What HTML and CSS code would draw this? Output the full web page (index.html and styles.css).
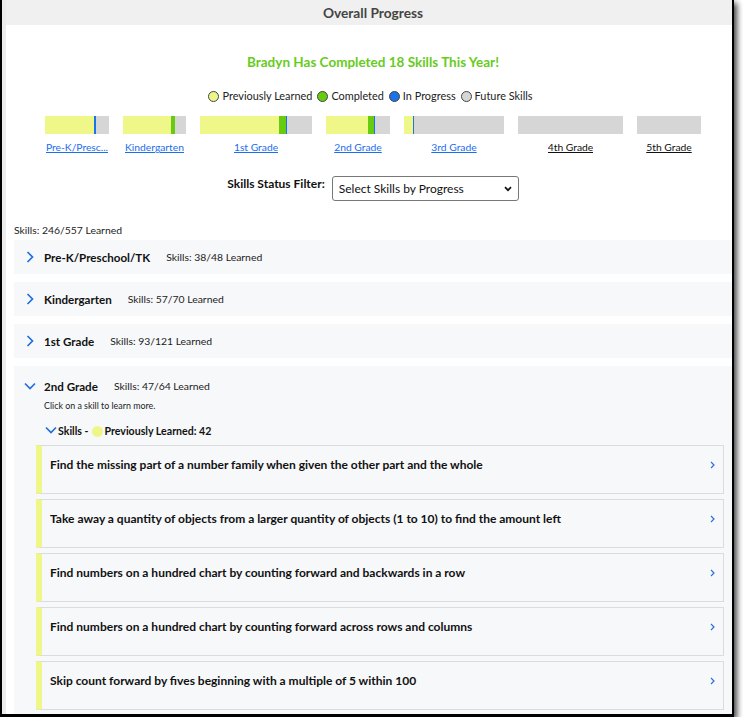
FILE: index.html
```html
<!DOCTYPE html>
<html>
<head>
<meta charset="utf-8">
<link rel="stylesheet" href="styles.css">
</head>
<body>
<div class="window">
  <div class="page">
    <div class="header">Overall Progress</div>
    <div class="title">Bradyn Has Completed 18 Skills This Year!</div>
    <div class="legend">
      <span class="dot dot-prev"></span><span class="leg-text">Previously Learned</span>
      <span class="dot dot-comp"></span><span class="leg-text">Completed</span>
      <span class="dot dot-prog"></span><span class="leg-text">In Progress</span>
      <span class="dot dot-future"></span><span class="leg-text">Future Skills</span>
    </div>
    <div class="bars">
      <div class="bar-col" style="width:64px">
        <div class="bar"><span class="seg prev" style="width:49px"></span><span class="seg prog" style="width:2px"></span></div>
        <a class="bar-label link">Pre-K/Presc...</a>
      </div>
      <div class="bar-col" style="width:63px">
        <div class="bar"><span class="seg prev" style="width:48px"></span><span class="seg comp" style="width:4px"></span></div>
        <a class="bar-label link">Kindergarten</a>
      </div>
      <div class="bar-col" style="width:112px">
        <div class="bar"><span class="seg prev" style="width:79px"></span><span class="seg comp" style="width:7px"></span><span class="seg prog" style="width:1px"></span></div>
        <a class="bar-label link">1st Grade</a>
      </div>
      <div class="bar-col" style="width:64px">
        <div class="bar"><span class="seg prev" style="width:42px"></span><span class="seg comp" style="width:6px"></span><span class="seg prog" style="width:1px"></span></div>
        <a class="bar-label link">2nd Grade</a>
      </div>
      <div class="bar-col" style="width:100px">
        <div class="bar"><span class="seg prev" style="width:9px"></span><span class="seg prog" style="width:1px"></span></div>
        <a class="bar-label link">3rd Grade</a>
      </div>
      <div class="bar-col" style="width:105px">
        <div class="bar"></div>
        <a class="bar-label plain">4th Grade</a>
      </div>
      <div class="bar-col" style="width:64px">
        <div class="bar"></div>
        <a class="bar-label plain">5th Grade</a>
      </div>
    </div>
    <div class="filter">
      <span class="filter-label">Skills Status Filter:</span>
      <div class="select">
        <span>Select Skills by Progress</span>
        <svg class="sel-chev" width="8" height="6" viewBox="0 0 8 6"><path d="M1 1.2 L4 4.2 L7 1.2" fill="none" stroke="#111" stroke-width="1.7"/></svg>
      </div>
    </div>
    <div class="total">Skills: 246/557 Learned</div>

    <div class="acc">
      <div class="acc-head">
        <svg class="chev-r" width="8" height="12" viewBox="0 0 8 12"><path d="M1.5 1 L6.5 6 L1.5 11" fill="none" stroke="#1f6fe0" stroke-width="1.7"/></svg>
        <span class="acc-title">Pre-K/Preschool/TK</span>
        <span class="acc-count">Skills: 38/48 Learned</span>
      </div>
    </div>
    <div class="acc">
      <div class="acc-head">
        <svg class="chev-r" width="8" height="12" viewBox="0 0 8 12"><path d="M1.5 1 L6.5 6 L1.5 11" fill="none" stroke="#1f6fe0" stroke-width="1.7"/></svg>
        <span class="acc-title">Kindergarten</span>
        <span class="acc-count">Skills: 57/70 Learned</span>
      </div>
    </div>
    <div class="acc">
      <div class="acc-head">
        <svg class="chev-r" width="8" height="12" viewBox="0 0 8 12"><path d="M1.5 1 L6.5 6 L1.5 11" fill="none" stroke="#1f6fe0" stroke-width="1.7"/></svg>
        <span class="acc-title">1st Grade</span>
        <span class="acc-count">Skills: 93/121 Learned</span>
      </div>
    </div>
    <div class="acc open">
      <div class="acc-head">
        <svg class="chev-d" width="12" height="8" viewBox="0 0 12 8"><path d="M1 1.5 L6 6.5 L11 1.5" fill="none" stroke="#1f6fe0" stroke-width="1.7"/></svg>
        <span class="acc-title">2nd Grade</span>
        <span class="acc-count">Skills: 47/64 Learned</span>
      </div>
      <div class="hint">Click on a skill to learn more.</div>
      <div class="sub-head">
        <svg class="chev-sub" width="12" height="8" viewBox="0 0 12 8"><path d="M1 1.5 L6 6.5 L11 1.5" fill="none" stroke="#1f6fe0" stroke-width="1.7"/></svg>
        <span>Skills -</span>
        <span class="sub-dot"></span>
        <span>Previously Learned: 42</span>
      </div>
      <div class="cards">
        <div class="card"><span>Find the missing part of a number family when given the other part and the whole</span><svg class="card-chev" width="5" height="8" viewBox="0 0 5 8"><path d="M1 1 L4 4 L1 7" fill="none" stroke="#2a6fe0" stroke-width="1.2"/></svg></div>
        <div class="card"><span>Take away a quantity of objects from a larger quantity of objects (1 to 10) to find the amount left</span><svg class="card-chev" width="5" height="8" viewBox="0 0 5 8"><path d="M1 1 L4 4 L1 7" fill="none" stroke="#2a6fe0" stroke-width="1.2"/></svg></div>
        <div class="card"><span>Find numbers on a hundred chart by counting forward and backwards in a row</span><svg class="card-chev" width="5" height="8" viewBox="0 0 5 8"><path d="M1 1 L4 4 L1 7" fill="none" stroke="#2a6fe0" stroke-width="1.2"/></svg></div>
        <div class="card"><span>Find numbers on a hundred chart by counting forward across rows and columns</span><svg class="card-chev" width="5" height="8" viewBox="0 0 5 8"><path d="M1 1 L4 4 L1 7" fill="none" stroke="#2a6fe0" stroke-width="1.2"/></svg></div>
        <div class="card"><span>Skip count forward by fives beginning with a multiple of 5 within 100</span><svg class="card-chev" width="5" height="8" viewBox="0 0 5 8"><path d="M1 1 L4 4 L1 7" fill="none" stroke="#2a6fe0" stroke-width="1.2"/></svg></div>
        <div class="card card-last"></div>
      </div>
    </div>
  </div>
</div>
</body>
</html>
```
FILE: styles.css
```css
html, body {
  margin: 0;
  padding: 0;
  background: #fff;
}
body {
  font-family: "Lato", "Noto Sans", sans-serif;
  color: #111;
}
.window {
  width: 730px;
  height: 714px;
  border: 2px solid #000;
  border-top: none;
  border-bottom-width: 3px;
  overflow: hidden;
  box-shadow: 3px 3px 6px rgba(0, 0, 0, 0.75);
}
.page {
  width: 734px;
  min-height: 714px;
  border-left: 4px solid #ececec;
  background: #fff;
}
.header {
  height: 25px;
  line-height: 25px;
  background: #f0f0f0;
  text-align: center;
  font-weight: 700;
  font-size: 13.7px;
  color: #444;
}
.title {
  margin-top: 29px;
  text-align: center;
  color: #66cc1c;
  font-weight: 700;
  font-size: 13.5px;
  line-height: 16px;
}
.legend {
  margin-top: 19px;
  display: flex;
  justify-content: center;
  align-items: center;
  font-size: 10.9px;
  line-height: 14px;
  color: #222;
}
.dot {
  width: 9px;
  height: 9px;
  border-radius: 50%;
  border: 1px solid #444;
  margin-right: 3px;
}
.leg-text { margin-right: 5px; }
.dot-prev { background: #eef68a; }
.dot-comp { background: #66cc11; }
.dot-prog { background: #1a73e8; }
.dot-future { background: #d6d6d6; }
.bars {
  margin-top: 13px;
  padding-left: 39px;
  display: flex;
  gap: 14px;
}
.bar-col {
  display: flex;
  flex-direction: column;
  align-items: center;
}
.bar {
  width: 100%;
  height: 18px;
  background: #d6d6d6;
  display: flex;
}
.seg { height: 100%; }
.seg.prev { background: #eef787; }
.seg.comp { background: #66cc11; }
.seg.prog { background: #1a73e8; }
.bar-label {
  margin-top: 7px;
  font-size: 10.3px;
  line-height: 12px;
  text-decoration: underline;
  max-width: 100%;
  white-space: nowrap;
  overflow: hidden;
}
.bar-label.link { color: #1a6ef0; }
.bar-label.plain { color: #111; }
.filter {
  margin-top: 23px;
  display: flex;
  justify-content: center;
  align-items: flex-start;
  gap: 7px;
}
.filter-label {
  font-weight: 700;
  font-size: 12px;
  line-height: 14px;
  padding-top: 1px;
}
.select {
  width: 173px;
  height: 23px;
  border: 1px solid #777;
  border-radius: 3px;
  display: flex;
  align-items: center;
  justify-content: space-between;
  padding: 0 6px 0 6px;
  font-size: 12px;
  color: #111;
}
.sel-chev { margin-top: 1px; }
.total {
  margin-top: 22px;
  padding-left: 8px;
  font-size: 10.4px;
  line-height: 14px;
  color: #222;
}
.acc {
  margin: 3px 8px 8px 8px;
  background: #f7f8fa;
}
.acc + .acc { margin-top: 0; }
.acc-head {
  height: 34px;
  display: flex;
  align-items: center;
  padding-left: 12px;
}
.chev-r { margin-right: 10px; }
.chev-d { margin-left: -2px; margin-right: 8px; }
.acc-title {
  font-weight: 700;
  font-size: 11.6px;
  margin-right: 16px;
}
.acc-count {
  font-size: 10.4px;
  color: #222;
}
.open .acc-head { height: 40px; }
.hint {
  margin-top: -6px;
  padding-left: 30px;
  font-size: 8.9px;
  line-height: 12px;
  color: #222;
}
.sub-head {
  margin-top: 12px;
  padding-left: 31px;
  display: flex;
  align-items: center;
  font-weight: 700;
  font-size: 10.6px;
  line-height: 14px;
}
.chev-sub { margin-right: 1px; margin-top: -3px; }
.sub-dot {
  width: 11px;
  height: 11px;
  border-radius: 50%;
  background: #eef68a;
  margin: 0 2px 0 3px;
}
.cards {
  margin-top: 7px;
  padding: 0 8px 0 22px;
  display: flex;
  flex-direction: column;
  gap: 5px;
}
.card {
  height: 47px;
  border: 1px solid #dcdcdc;
  border-left: 6px solid #eef787;
  background: #f7f8fa;
  display: flex;
  align-items: center;
  justify-content: space-between;
  padding: 0 8px 0 8px;
  font-weight: 700;
  font-size: 12px;
  color: #111;
}
.card span { margin-top: -10px; }
.card-chev { margin-top: -10px; }
```
